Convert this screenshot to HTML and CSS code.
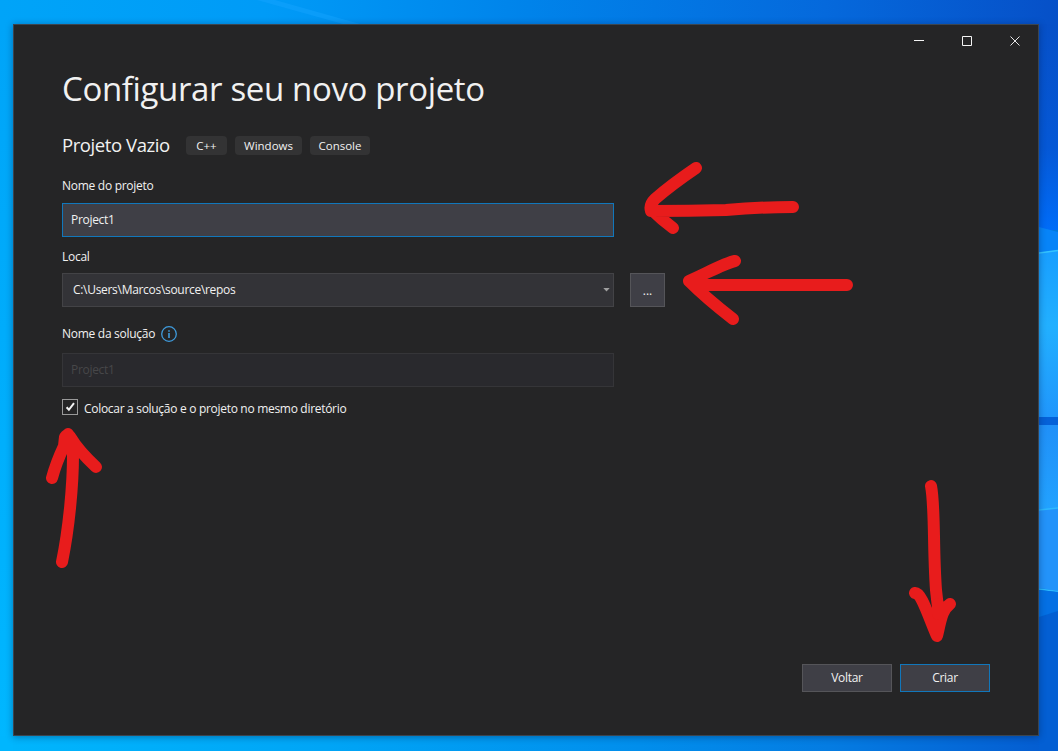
FILE: index.html
```html
<!DOCTYPE html>
<html lang="pt-BR">
<head>
<meta charset="utf-8">
<title>Configurar seu novo projeto</title>
<link rel="stylesheet" href="styles.css">
</head>
<body>
<div class="desktop">
  <svg class="wallpaper" width="1058" height="751" viewBox="0 0 1058 751" aria-hidden="true">
    <defs>
      <linearGradient id="top" x1="0" x2="1" y1="0" y2="0">
        <stop offset="0" stop-color="#00a4f8"/><stop offset=".25" stop-color="#009bf7"/><stop offset=".5" stop-color="#0083ea"/><stop offset=".78" stop-color="#0569dc"/><stop offset="1" stop-color="#0650c8"/>
      </linearGradient>
      <linearGradient id="bottom" x1="0" x2="1" y1="0" y2="0">
        <stop offset="0" stop-color="#00b5fd"/><stop offset=".3" stop-color="#00a5f6"/><stop offset=".6" stop-color="#018eec"/><stop offset=".78" stop-color="#047ce2"/><stop offset="1" stop-color="#045bd0"/>
      </linearGradient>
      <linearGradient id="left" x1="0" x2="0" y1="0" y2="1">
        <stop offset="0" stop-color="#00a4f8"/><stop offset="1" stop-color="#00b7ff"/>
      </linearGradient>
      <linearGradient id="sky" x1="0" x2="0" y1="0" y2="1">
        <stop offset="0" stop-color="#0650c8"/><stop offset=".6" stop-color="#0558d6"/><stop offset="1" stop-color="#006cf8"/>
      </linearGradient>
      <linearGradient id="paneA" x1="0" x2="0" y1="0" y2="1">
        <stop offset="0" stop-color="#189eff"/><stop offset=".45" stop-color="#22b0ff"/><stop offset="1" stop-color="#2096fc"/>
      </linearGradient>
      <linearGradient id="paneB" x1="0" x2="0" y1="0" y2="1">
        <stop offset="0" stop-color="#2090f8"/><stop offset="1" stop-color="#22a2ff"/>
      </linearGradient>
    </defs>
    <rect width="1058" height="24" fill="url(#top)"/>
    <path d="M257 0H275L360 24H343Z" fill="#16a5ff" opacity=".45"/>
    <rect y="24" width="13" height="727" fill="url(#left)"/>
    <rect x="13" y="736" width="1045" height="15" fill="url(#bottom)"/>
    <rect y="736" width="13" height="15" fill="#00b6fe"/>
    <rect x="1039" y="24" width="19" height="206" fill="url(#sky)"/>
    <path d="M1039 227L1058 232V252H1039Z" fill="#0784f8"/>
    <path d="M1039 253L1058 250V418H1039Z" fill="url(#paneA)"/>
    <path d="M1039 253L1058 250.500" stroke="#35c4ff" stroke-width="1.500"/>
    <rect x="1039" y="417" width="19" height="8" fill="#0561d8"/>
    <path d="M1039 425H1058V508L1039 510Z" fill="url(#paneB)"/>
    <path d="M1039 510L1058 508V591L1039 588Z" fill="#2393fa"/>
    <path d="M1039 510L1058 508M1039 589L1058 591.500" stroke="#2db9ff" stroke-width="1.500"/>
    <path d="M1039 590L1058 592V611L1039 617Z" fill="#0470e4"/>
    <path d="M1039 617L1058 611V751H1039Z" fill="#035fd3"/>
  </svg>
  <main class="window">
    <div class="titlebar">
      <svg width="108" height="12" viewBox="0 0 108 12" fill="none" stroke="#f4f4f4">
        <path d="M0 5.500H10M48.500 1.500H57.500V10.500H48.500Z"/>
        <path d="M96.500 1.500L105.500 10.500M105.500 1.500L96.500 10.500" stroke="#e6e6e6"/>
      </svg>
    </div>
    <h1 class="title">Configurar seu novo projeto</h1>
    <div class="template">
      <h2 class="template-name">Projeto Vazio</h2>
      <span class="tag tag-cpp">C++</span><span class="tag tag-windows">Windows</span><span class="tag tag-console">Console</span>
    </div>
    <div class="label label-name">Nome do projeto</div>
    <div class="field active"><span>Project1</span></div>
    <div class="label label-local">Local</div>
    <div class="location">
      <div class="field combo"><span class="path">C:\Users\Marcos\source\repos</span>
        <svg width="7" height="4" viewBox="0 0 7 4"><path d="M.3 0H6.700L3.500 3.500Z" fill="#a0a0a0"/></svg>
      </div>
      <div class="browse">...</div>
    </div>
    <div class="label label-solution"><span class="solution-text">Nome da solução</span>
      <svg width="16" height="16" viewBox="0 0 16 16"><circle cx="8" cy="8" r="7.300" fill="none" stroke="#3f9bdc" stroke-width="1.300"/><path d="M7.200 4.200H8.800V5.800H7.200ZM7.200 7H8.800V12H7.200Z" fill="#3f9bdc"/></svg>
    </div>
    <div class="field disabled"><span>Project1</span></div>
    <div class="check-row">
      <span class="checkbox"><svg width="14" height="14" viewBox="0 0 14 14"><path d="M3.600 7.300L5.900 9.800L11 3.200" fill="none" stroke="#f4f4f4" stroke-width="2"/></svg></span>
      <span class="check-text">Colocar a solução e o projeto no mesmo diretório</span>
    </div>
    <div class="actions"><div class="button">Voltar</div><div class="button primary">Criar</div></div>
  </main>
  <svg class="marks" width="1058" height="751" viewBox="0 0 1058 751" fill="none" stroke="#e81c1c" stroke-width="12" stroke-linecap="round" stroke-linejoin="round" aria-hidden="true">
    <path d="M696 168Q671 185 655 199Q649 205 651 211Q689 211 726 210Q760 207 793 207M652 210Q661 219 673 228"/>
    <path d="M735 261C725 263 707 273 689 281Q706 298 733 319M692 284Q699 285 710 285H847"/>
    <path d="M52 478Q56 463 64 446L65 437Q68 433 71 438Q78 450 96 467M68 434Q73 444 73 455C73 485 69 528 62 562"/>
    <path d="M931 486C935 505 933 550 936 590Q937 603 940 617M915 593C921 592 928 615 937 636C941 619 942 610 950 604"/>
    <path d="M938 604V614"/>
  </svg>
</div>
</body>
</html>
```

FILE: styles.css
```css
* { box-sizing: border-box; }
body { margin: 0; overflow: hidden; font-family: "Open Sans", "Noto Sans", sans-serif; color: #f1f1f1; }
.desktop { position: relative; width: 1058px; height: 751px; padding: 24px 19px 15px 13px; background: #0078dc; }
.wallpaper, .marks { position: absolute; inset: 0; display: block; }
.marks { pointer-events: none; }
.window { position: relative; width: 1026px; height: 712px; padding: 0 48px; background: #252526; border: 1px solid #3b4550; box-shadow: 0 1px 7px rgba(0, 25, 60, .4); display: flex; flex-direction: column; }
.titlebar { height: 35px; display: flex; justify-content: flex-end; padding-top: 10px; margin-right: -32px; }
.title { margin: 4px 0 0; height: 50px; line-height: 50px; font-size: 33px; font-weight: 400; white-space: nowrap; letter-spacing: -.36px; }
.template { display: flex; align-items: center; height: 20px; margin-top: 21px; }
.template-name { width: 124px; margin: 0; font-size: 18.500px; line-height: 22px; font-weight: 400; letter-spacing: -.42px; white-space: nowrap; }
.tag { height: 19px; line-height: 19px; margin-right: 8px; text-align: center; font-size: 11.500px; border-radius: 4px; background: #333334; }
.tag-cpp { width: 41px; }
.tag-windows { width: 67px; }
.tag-console { width: 60px; }
.label { height: 18px; line-height: 18px; font-size: 12px; letter-spacing: -.28px; white-space: nowrap; }
.label-name { margin-top: 22px; }
.field { width: 552px; height: 34px; display: flex; align-items: center; padding: 0 8px; border: 1px solid #434346; background: #333337; font-size: 12px; letter-spacing: -.3px; flex: none; }
.field span { margin-top: -2px; }
.active { margin-top: 8px; background: #3f3f46; border-color: #1177bb; }
.label-local { margin-top: 11px; }
.location { display: flex; gap: 16px; margin-top: 7px; }
.combo { padding: 0 3px 0 10px; justify-content: space-between; }
.browse { width: 35px; height: 34px; border: 1px solid #555559; background: #3f3f46; text-align: center; font-size: 12px; line-height: 34px; }
.label-solution { margin-top: 18px; display: flex; align-items: center; }
.solution-text { width: 99px; }
.disabled { margin-top: 10px; background: #29292d; border-color: #353538; color: #474749; }
.check-row { display: flex; height: 18px; margin-top: 11px; gap: 6px; font-size: 12px; line-height: 22px; white-space: nowrap; }
.checkbox { width: 16px; height: 16px; margin-top: 1px; border: 1px solid #999; display: flex; }
.check-text { letter-spacing: -.3px; }
.actions { display: flex; justify-content: flex-end; gap: 8px; margin-top: auto; margin-bottom: 43px; }
.button { width: 90px; height: 28px; border: 1px solid #555559; background: #3f3f46; text-align: center; line-height: 26px; font-size: 12px; letter-spacing: -.3px; }
.primary { border-color: #1177bb; }
```
